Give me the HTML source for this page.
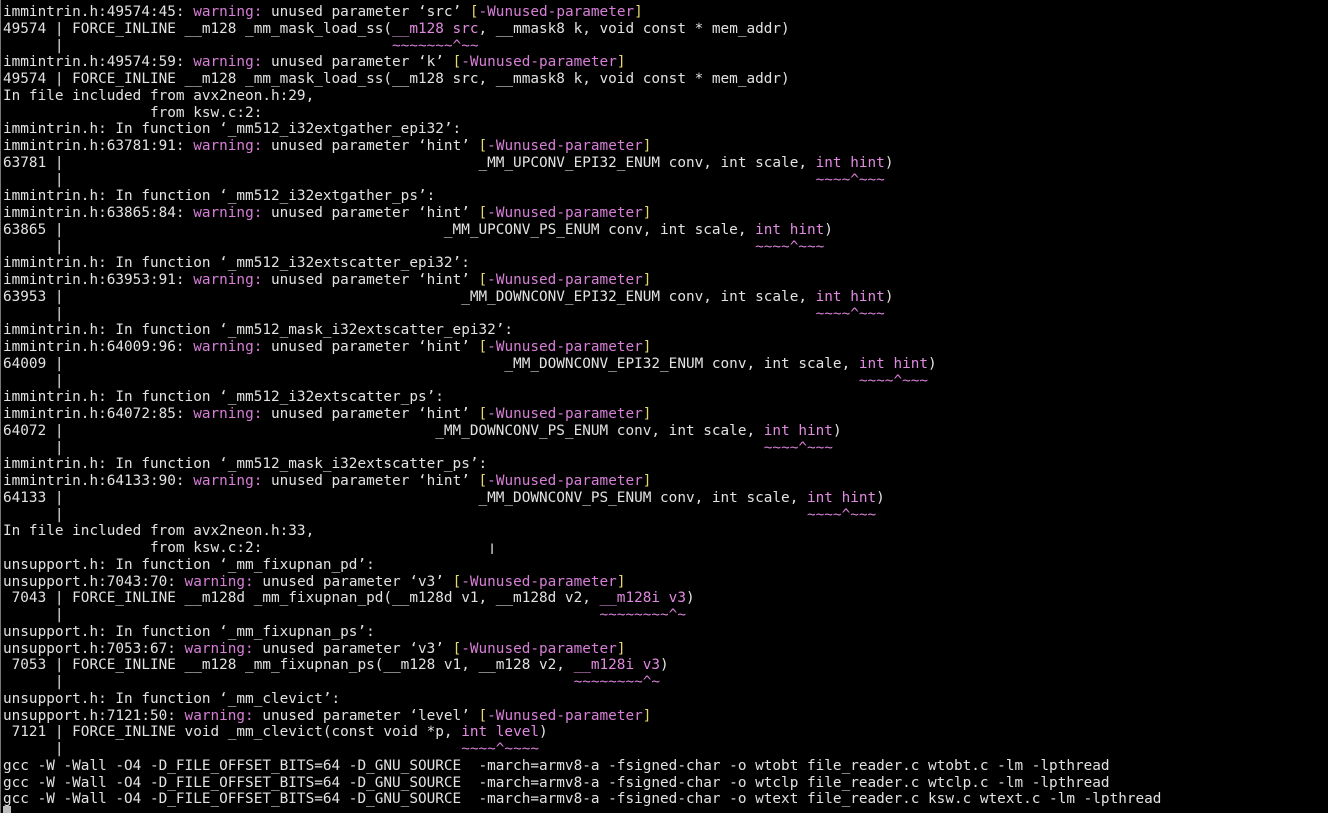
<!DOCTYPE html>
<html><head><meta charset="utf-8"><style>
html,body{margin:0;padding:0;background:#000;width:1328px;height:813px;overflow:hidden}
pre{margin:0;position:absolute;left:3px;top:4px;font-family:"DejaVu Sans Mono","Liberation Mono",monospace;font-size:14.36px;line-height:16.75px;color:#e2e2e2;white-space:pre}
.m{color:#d77fd7}.y{color:#e6d86a}.b{color:#e08ae0}
#edge{position:absolute;left:0;top:0;width:1px;height:813px;background:#777}
#cur{position:absolute;left:3px;top:806px;width:8px;height:7px;background:#bbb}
#ib{position:absolute;left:490px;top:542px;color:#ccc;font:14px "DejaVu Sans",sans-serif}
</style></head><body>
<div id="edge"></div>
<pre>immintrin.h:49574:45: <span class="m">warning:</span> unused parameter ‘src’ <span class="y">[</span><span class="m">-Wunused-parameter</span><span class="y">]</span>
49574 | FORCE_INLINE __m128 _mm_mask_load_ss(<span class="b">__m128 src</span>, __mmask8 k, void const * mem_addr)
      |                                      <span class="m">~~~~~~~^~~</span>
immintrin.h:49574:59: <span class="m">warning:</span> unused parameter ‘k’ <span class="y">[</span><span class="m">-Wunused-parameter</span><span class="y">]</span>
49574 | FORCE_INLINE __m128 _mm_mask_load_ss(__m128 src, __mmask8 k, void const * mem_addr)
In file included from avx2neon.h:29,
                 from ksw.c:2:
immintrin.h: In function ‘_mm512_i32extgather_epi32’:
immintrin.h:63781:91: <span class="m">warning:</span> unused parameter ‘hint’ <span class="y">[</span><span class="m">-Wunused-parameter</span><span class="y">]</span>
63781 |                                                _MM_UPCONV_EPI32_ENUM conv, int scale, <span class="b">int hint</span>)
      |                                                                                       <span class="m">~~~~^~~~</span>
immintrin.h: In function ‘_mm512_i32extgather_ps’:
immintrin.h:63865:84: <span class="m">warning:</span> unused parameter ‘hint’ <span class="y">[</span><span class="m">-Wunused-parameter</span><span class="y">]</span>
63865 |                                            _MM_UPCONV_PS_ENUM conv, int scale, <span class="b">int hint</span>)
      |                                                                                <span class="m">~~~~^~~~</span>
immintrin.h: In function ‘_mm512_i32extscatter_epi32’:
immintrin.h:63953:91: <span class="m">warning:</span> unused parameter ‘hint’ <span class="y">[</span><span class="m">-Wunused-parameter</span><span class="y">]</span>
63953 |                                              _MM_DOWNCONV_EPI32_ENUM conv, int scale, <span class="b">int hint</span>)
      |                                                                                       <span class="m">~~~~^~~~</span>
immintrin.h: In function ‘_mm512_mask_i32extscatter_epi32’:
immintrin.h:64009:96: <span class="m">warning:</span> unused parameter ‘hint’ <span class="y">[</span><span class="m">-Wunused-parameter</span><span class="y">]</span>
64009 |                                                   _MM_DOWNCONV_EPI32_ENUM conv, int scale, <span class="b">int hint</span>)
      |                                                                                            <span class="m">~~~~^~~~</span>
immintrin.h: In function ‘_mm512_i32extscatter_ps’:
immintrin.h:64072:85: <span class="m">warning:</span> unused parameter ‘hint’ <span class="y">[</span><span class="m">-Wunused-parameter</span><span class="y">]</span>
64072 |                                           _MM_DOWNCONV_PS_ENUM conv, int scale, <span class="b">int hint</span>)
      |                                                                                 <span class="m">~~~~^~~~</span>
immintrin.h: In function ‘_mm512_mask_i32extscatter_ps’:
immintrin.h:64133:90: <span class="m">warning:</span> unused parameter ‘hint’ <span class="y">[</span><span class="m">-Wunused-parameter</span><span class="y">]</span>
64133 |                                                _MM_DOWNCONV_PS_ENUM conv, int scale, <span class="b">int hint</span>)
      |                                                                                      <span class="m">~~~~^~~~</span>
In file included from avx2neon.h:33,
                 from ksw.c:2:
unsupport.h: In function ‘_mm_fixupnan_pd’:
unsupport.h:7043:70: <span class="m">warning:</span> unused parameter ‘v3’ <span class="y">[</span><span class="m">-Wunused-parameter</span><span class="y">]</span>
 7043 | FORCE_INLINE __m128d _mm_fixupnan_pd(__m128d v1, __m128d v2, <span class="b">__m128i v3</span>)
      |                                                              <span class="m">~~~~~~~~^~</span>
unsupport.h: In function ‘_mm_fixupnan_ps’:
unsupport.h:7053:67: <span class="m">warning:</span> unused parameter ‘v3’ <span class="y">[</span><span class="m">-Wunused-parameter</span><span class="y">]</span>
 7053 | FORCE_INLINE __m128 _mm_fixupnan_ps(__m128 v1, __m128 v2, <span class="b">__m128i v3</span>)
      |                                                           <span class="m">~~~~~~~~^~</span>
unsupport.h: In function ‘_mm_clevict’:
unsupport.h:7121:50: <span class="m">warning:</span> unused parameter ‘level’ <span class="y">[</span><span class="m">-Wunused-parameter</span><span class="y">]</span>
 7121 | FORCE_INLINE void _mm_clevict(const void *p, <span class="b">int level</span>)
      |                                              <span class="m">~~~~^~~~~</span>
gcc -W -Wall -O4 -D_FILE_OFFSET_BITS=64 -D_GNU_SOURCE  -march=armv8-a -fsigned-char -o wtobt file_reader.c wtobt.c -lm -lpthread
gcc -W -Wall -O4 -D_FILE_OFFSET_BITS=64 -D_GNU_SOURCE  -march=armv8-a -fsigned-char -o wtclp file_reader.c wtclp.c -lm -lpthread
gcc -W -Wall -O4 -D_FILE_OFFSET_BITS=64 -D_GNU_SOURCE  -march=armv8-a -fsigned-char -o wtext file_reader.c ksw.c wtext.c -lm -lpthread</pre>
<div id="ib">I</div>
<div id="cur"></div>
</body></html>
